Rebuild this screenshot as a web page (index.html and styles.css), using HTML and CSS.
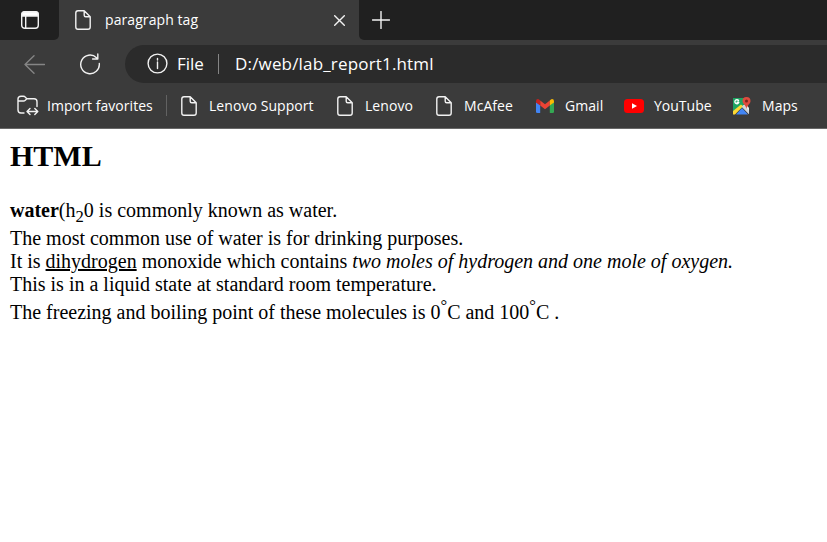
FILE: index.html
```html
<!DOCTYPE html>
<html lang="en">
<head>
<meta charset="utf-8">
<title>paragraph tag</title>
<link rel="stylesheet" href="styles.css">
</head>
<body>
<svg class="defs" width="0" height="0">
  <symbol id="doc" viewBox="0 0 16 20"><path d="M3 .8H9.2L15.2 6.8V17Q15.2 19.2 13 19.2H3Q.8 19.2 .8 17V3Q.8 .8 3 .8ZM9.2 .8V5.3Q9.2 6.8 10.7 6.8H15.2"/></symbol>
</svg>
<div class="tabs">
  <div class="side"><svg width="18" height="18" viewBox="0 0 18 18"><rect x=".7" y=".7" width="16.6" height="16.6" rx="3"/><path class="solid" d="M1 5V3Q1 1 3 1H15Q17 1 17 3V5Z"/><path d="M4.7 5V17"/></svg></div>
  <div class="tab"><svg width="16" height="20"><use href="#doc"/></svg><span class="tabname">paragraph tag</span><svg class="close" width="11" height="11" viewBox="0 0 11 11"><path d="M.7 .7 10.3 10.3M10.3 .7 .7 10.3"/></svg></div>
  <div class="rest"><svg width="18" height="18" viewBox="0 0 18 18"><path d="M9 .5V17.5M.5 9H17.5"/></svg></div>
</div>
<div class="toolbar">
  <svg class="back" width="21" height="19" viewBox="0 0 21 19"><path d="M10 .8 1 9.5 10 18.2M1 9.5H20.5"/></svg>
  <svg class="reload" width="22" height="22" viewBox="0 0 22 22"><path d="M20.3 10.5A9.3 9.3 0 1 1 17.5 4.7M18.8 1V6H13.6"/></svg>
  <div class="address">
    <svg width="21" height="21" viewBox="0 0 21 21"><circle cx="10.5" cy="10.5" r="9.4"/><path d="M10.5 9V15.5M10.5 5.5V7"/></svg>
    <span class="file">File</span><i class="bar"></i><span class="url">D:/web/lab_report1.html</span>
  </div>
</div>
<div class="bookmarks">
  <div class="mark import"><svg width="22" height="22" viewBox="0 0 22 22"><path d="M7 18H4Q1 18 1 15V4Q1 1.2 4 1.2H6.5Q7.5 1.2 8.3 2.1L9.8 3.8H17Q20 3.8 20 6.8V11.5M1 6H6.5Q7.5 6 8.3 5.2L9.8 3.8M10.2 16.5H20.5M13 13.5 10 16.5 13 19.5M17.8 13.5 20.8 16.5 17.8 19.5"/></svg><span>Import favorites</span></div>
  <div class="mark support"><svg width="16" height="20"><use href="#doc"/></svg><span>Lenovo Support</span></div>
  <div class="mark lenovo"><svg width="16" height="20"><use href="#doc"/></svg><span>Lenovo</span></div>
  <div class="mark mcafee"><svg width="16" height="20"><use href="#doc"/></svg><span>McAfee</span></div>
  <div class="mark gmail"><svg class="color" width="18" height="14" viewBox="0 0 18 14"><path fill="#4285f4" d="M0 3 4.2 6V14H1.3Q0 14 0 12.7Z"/><path fill="#34a853" d="M18 3 13.8 6V14H16.7Q18 14 18 12.7Z"/><path fill="#ea4335" d="M4.2 1.6 9 5.2 13.8 1.6V6.6L9 10.2 4.2 6.6Z"/><path fill="#c5221f" d="M0 2.2Q0 0 2 0Q3 0 4.2 1.6V6.6L0 3.5Z"/><path fill="#fbbc04" d="M18 2.2Q18 0 16 0Q15 0 13.8 1.6V6.6L18 3.5Z"/></svg><span>Gmail</span></div>
  <div class="mark youtube"><svg class="color" width="20" height="14" viewBox="0 0 20 14"><rect width="20" height="14" rx="3.5" fill="#f00"/><path fill="#fff" d="M8 4.2 13 7 8 9.8Z"/></svg><span>YouTube</span></div>
  <div class="mark maps"><svg class="color" width="18" height="18" viewBox="0 0 18 18"><path fill="#1fa463" d="M0 1H12L13 8 0 17Z"/><path fill="#e8eaed" d="M9 9 13 7 16 11V17L9 10Z"/><path fill="#fdd835" d="M0 14 8 7.5 10 9.3 2 17.5H0Z"/><path fill="#4285f4" d="M3 17.5 9 11 15 17.5Z"/><path fill="#d2d6da" d="M9 9.8 11 8 16 14V17Z"/><path fill="none" stroke="#fff" d="M5.5 3.5A2 2 0 1 0 5.8 5.3H4.1"/><path fill="#df4b3e" d="M13.5 0A4 4 0 0 0 9.5 4C9.5 7 12.8 7.8 13.5 12C14.2 7.8 17.5 7 17.5 4A4 4 0 0 0 13.5 0Z"/><circle cx="13.5" cy="4" r="1.5" fill="#7b241d"/></svg><span>Maps</span></div>
</div>
<main>
  <h2>HTML</h2>
  <p><b>water</b>(h<sub>2</sub>0 is commonly known as water.<br>
  The most common use of water is for drinking purposes.<br>
  It is <u>dihydrogen</u> monoxide which contains <i>two moles of hydrogen and one mole of oxygen.</i><br>
  This is in a liquid state at standard room temperature.<br>
  The freezing and boiling point of these molecules is 0<sup>°</sup>C and 100<sup>°</sup>C .</p>
</main>
</body>
</html>
```
FILE: styles.css
```css
* { box-sizing: border-box; }
body { margin: 0; background: #fff; color: #000; height: 542px; overflow: hidden; }
svg { display: block; flex: none; fill: none; stroke: #f2f2f2; stroke-width: 1.4; stroke-linecap: round; stroke-linejoin: round; }
.defs { position: absolute; }
.solid { fill: #fff; }
.color { stroke: none; }
.tabs, .toolbar, .bookmarks { display: flex; align-items: center; background: #3b3b3b; color: #fff; font-family: "Open Sans", "Noto Sans", sans-serif; white-space: nowrap; }
.tabs { height: 40px; font-size: 14px; background: linear-gradient(to right, #202020 30px, #3b3b3b 30px); }
.side { width: 59px; height: 40px; padding: 11px 0 0 21px; background: #202020; border-bottom-right-radius: 5px; }
.tabs { background: #3b3b3b; }
.tab { display: flex; align-items: center; width: 300px; height: 40px; padding-left: 16px; }
.tabname { width: 229px; margin-left: 14px; padding-bottom: 2px; letter-spacing: .08px; }
.rest { flex: 1; height: 40px; padding: 11px 0 0 13px; background: #202020; border-bottom-left-radius: 5px; }
.toolbar { height: 48px; padding-left: 24px; }
.back { stroke: #858585; }
.reload { margin-left: 34px; }
.address { display: flex; align-items: center; flex: 1; height: 38px; margin: 0 0 1px 24px; padding-left: 22px; background: #2b2b2b; border-radius: 19px 0 0 19px; font-size: 17px; }
.file { width: 50px; padding-left: 9px; }
.bar { width: 1px; height: 20px; background: #858585; }
.url { margin-left: 16px; letter-spacing: .17px; }
.bookmarks { height: 41px; padding: 0 0 5px 17px; border-bottom: 1px solid #686868; font-size: 14px; }
.mark { display: flex; align-items: center; flex: none; letter-spacing: .06px; }
.mark svg { margin-right: 12px; }
.import { width: 150px; height: 21px; border-right: 1px solid #626262; }
.import svg { margin-right: 8px; }
.support { width: 170px; padding-left: 14px; }
.lenovo { width: 99px; }
.mcafee { width: 100px; }
.gmail { width: 88px; }
.youtube { width: 109px; letter-spacing: 0; }
.mark.gmail svg, .mark.maps svg { margin-right: 11px; }
.mark.youtube svg { margin-right: 10px; }
main { padding: 10px; font: 20px "Liberation Serif", "Times New Roman", serif; }
h2 { margin: 0 0 26px; font-size: 30px; line-height: 34px; }
p { margin: 0; line-height: normal; }
```
